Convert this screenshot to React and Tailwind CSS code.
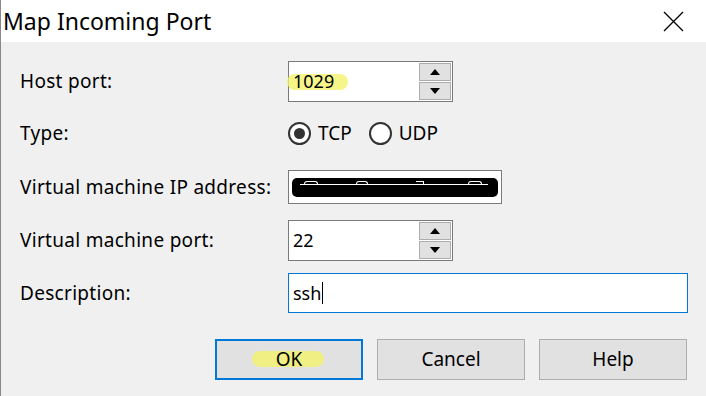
import React from 'react';

const font = { fontFamily: '"Noto Sans", "Open Sans", sans-serif' };

const SpinButtons = () => (
  <div className="flex flex-col w-[34px] h-full">
    <div className="flex-1 m-px mb-0 bg-[#e1e1e1] border border-[#adadad] flex items-center justify-center">
      <svg width="10" height="6" viewBox="0 0 10 6">
        <path d="M0 6 L5 0 L10 6 Z" fill="#000" />
      </svg>
    </div>
    <div className="flex-1 m-px bg-[#e1e1e1] border border-[#adadad] flex items-center justify-center">
      <svg width="10" height="6" viewBox="0 0 10 6">
        <path d="M0 0 L5 6 L10 0 Z" fill="#000" />
      </svg>
    </div>
  </div>
);

const Radio = ({ checked, label }) => (
  <div className="flex items-center gap-[7px]">
    <div className="w-[23px] h-[23px] rounded-full border-2 border-[#333] bg-white flex items-center justify-center">
      {checked && <div className="w-[11px] h-[11px] rounded-full bg-[#333]" />}
    </div>
    <span className="text-[19px] text-black">{label}</span>
  </div>
);

const Row = ({ label, className, children }) => (
  <div className={`flex items-center ${className}`}>
    <div className="w-[268px] text-[19px] tracking-[0.3px] text-black">{label}</div>
    {children}
  </div>
);

const App = () => {
  return (
    <div className="w-[706px] h-[396px] bg-[#f0f0f0] border-l border-[#888] overflow-hidden" style={font}>
      <div className="h-[42px] bg-white flex items-center justify-between pl-[2px] pr-[22px]">
        <span className="text-[23px] text-black">Map Incoming Port</span>
        <svg width="21" height="21" viewBox="0 0 21 21">
          <path d="M1 1 L20 20 M20 1 L1 20" stroke="#000" strokeWidth="1.3" />
        </svg>
      </div>

      <div className="pl-[19px] pt-[19px]">
        <Row label="Host port:" className="h-[41px]">
          <div className="w-[165px] h-[41px] bg-white border border-[#7a7a7a] flex">
            <div className="flex-1 flex items-center pl-[4px]">
              <span className="relative text-[18px] text-black">
                <span className="absolute -left-[6px] -right-[14px] top-[6px] h-[16px] rounded-full bg-[#f3f36b] opacity-80" />
                <span className="relative">1029</span>
              </span>
            </div>
            <SpinButtons />
          </div>
        </Row>

        <Row label="Type:" className="mt-[20px] h-[22px]">
          <div className="flex items-center gap-[17px]">
            <Radio checked label="TCP" />
            <Radio label="UDP" />
          </div>
        </Row>

        <Row label="Virtual machine IP address:" className="mt-[26px] h-[34px]">
          <div className="w-[214px] h-[34px] bg-white border border-[#7a7a7a] p-[3px] flex items-center">
            <div className="w-full h-[19px] bg-black rounded-[5px] relative overflow-hidden">
              <div className="absolute left-[8px] right-[10px] top-[6px] h-px bg-white" />
              <div className="absolute left-[12px] w-[14px] top-[3px] h-[3px] border-t border-x border-white rounded-t-[3px]" />
              <div className="absolute left-[64px] w-[12px] top-[3px] h-[3px] border-t border-x border-white rounded-t-[3px]" />
              <div className="absolute left-[124px] w-[8px] top-[3px] h-[3px] border-t border-r border-white" />
              <div className="absolute left-[176px] w-[14px] top-[3px] h-[3px] border-t border-x border-white rounded-t-[3px]" />
            </div>
          </div>
        </Row>

        <Row label="Virtual machine port:" className="mt-[16px] h-[41px]">
          <div className="w-[165px] h-[41px] bg-white border border-[#7a7a7a] flex">
            <div className="flex-1 flex items-center pl-[4px]">
              <span className="text-[18px] text-black">22</span>
            </div>
            <SpinButtons />
          </div>
        </Row>

        <Row label="Description:" className="mt-[12px] h-[40px]">
          <div className="w-[400px] h-[40px] bg-white border border-[#0078d7] flex items-center pl-[4px]">
            <span className="text-[18px] text-black">ssh</span>
            <span className="w-px h-[22px] bg-black ml-px" />
          </div>
        </Row>

        <div className="mt-[26px] flex gap-[14px] pl-[195px]">
          <button className="w-[148px] h-[41px] bg-[#e1e1e1] border-2 border-[#0078d7] flex items-center justify-center">
            <span className="relative text-[19px] text-black">
              <span className="absolute -left-[24px] -right-[22px] top-[6px] h-[16px] rounded-full bg-[#f3f36b] opacity-80" />
              <span className="relative">OK</span>
            </span>
          </button>
          <button className="w-[148px] h-[41px] bg-[#e1e1e1] border border-[#adadad] text-[19px] text-black">
            Cancel
          </button>
          <button className="w-[148px] h-[41px] bg-[#e1e1e1] border border-[#adadad] text-[19px] text-black">
            Help
          </button>
        </div>
      </div>
    </div>
  );
};

export default App;
